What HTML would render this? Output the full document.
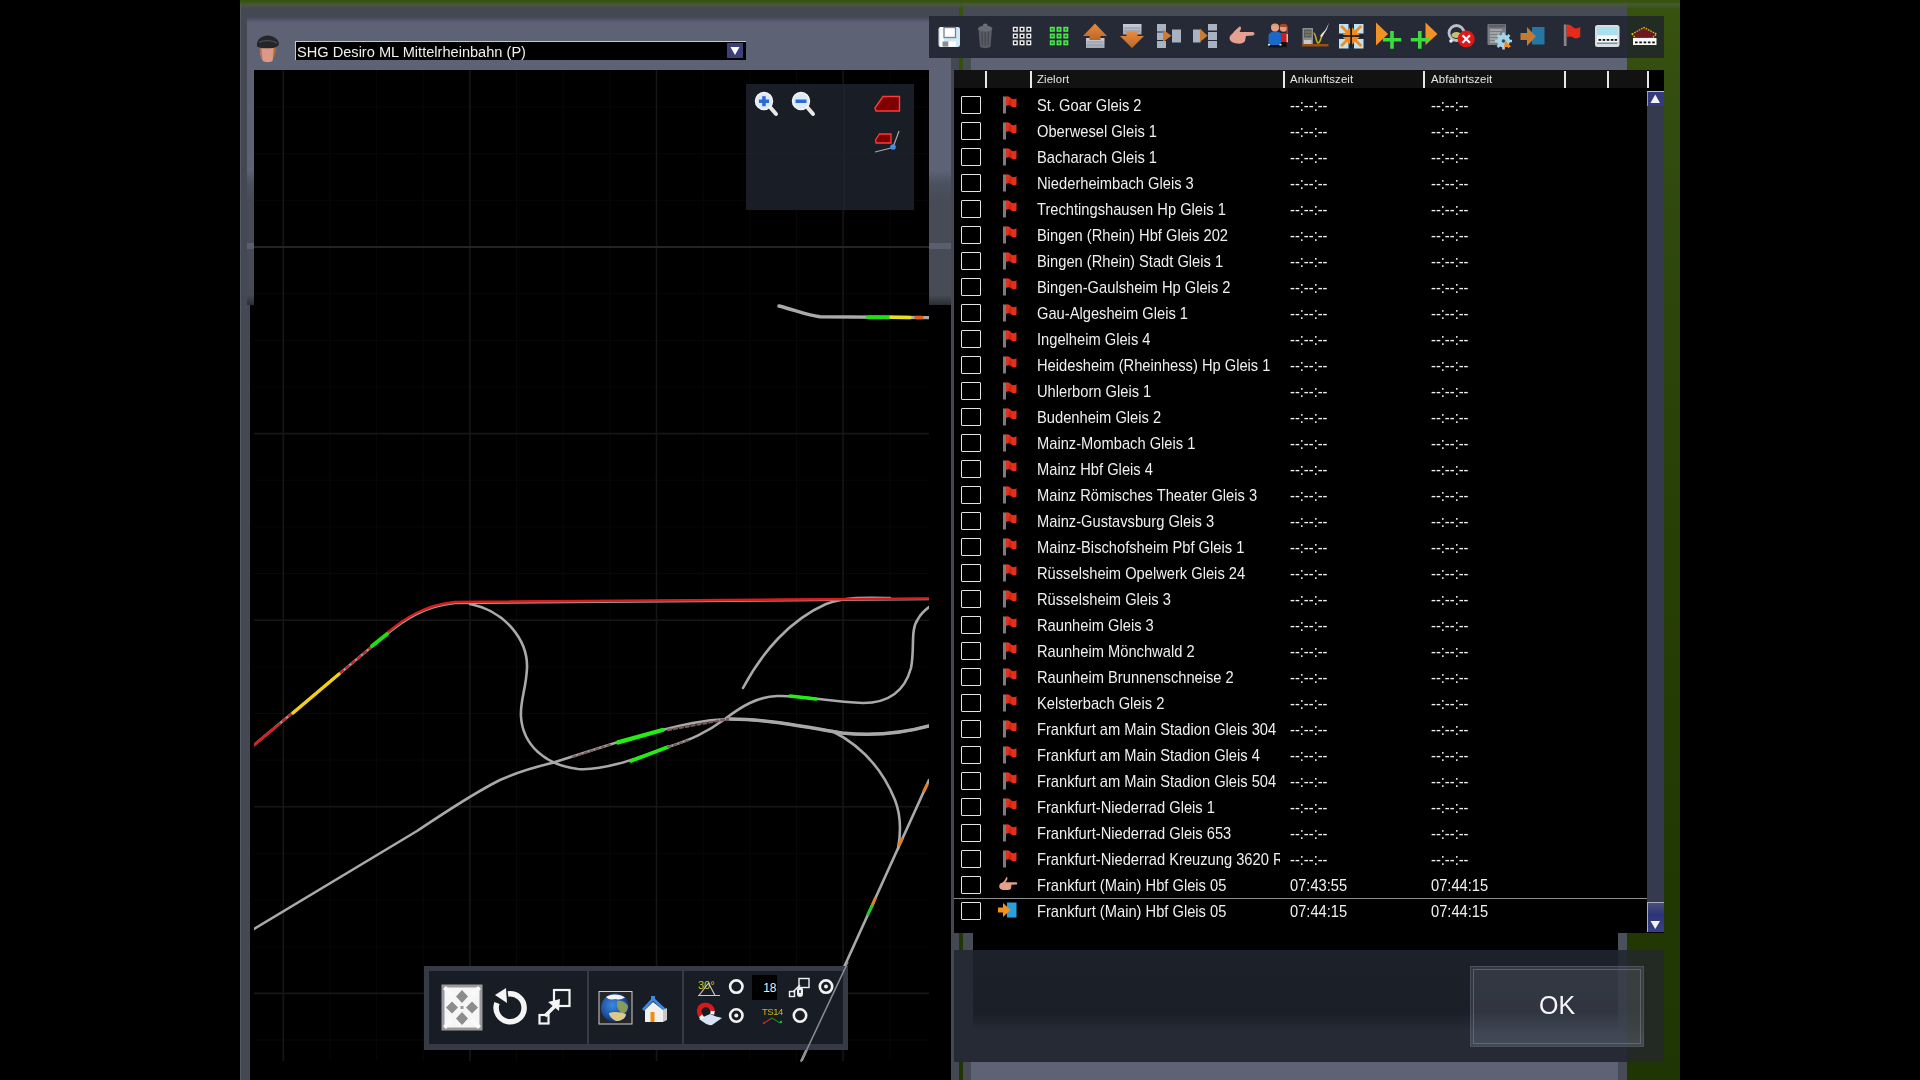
<!DOCTYPE html>
<html><head><meta charset="utf-8">
<style>
*{margin:0;padding:0;box-sizing:border-box}
html,body{width:1920px;height:1080px;overflow:hidden;background:#000;font-family:"Liberation Sans",sans-serif}
.a{position:absolute}
#world{left:240px;top:0;width:1440px;height:1080px;background:linear-gradient(#38530f 0px,#334c10 108px,#283f05 508px,#1f3503 1080px)}
#lw{left:240px;top:0;width:719px;height:1080px;background:#434852}
#lw .edge{left:0;top:0;width:1px;height:1080px;background:#545966}
#lpanel{left:247px;top:17px;width:704px;height:153px;background:linear-gradient(#424855 0,#5b6075 5px,#5d6275 7px)}
#lmid{left:247px;top:170px;width:704px;height:135px;background:linear-gradient(#5d6275 0,#4c5160 14px,#464b55 30px,#464b55 125px,#2a2d33 135px)}
#mapblk{left:250px;top:305px;width:701px;height:775px;background:#000}
#map{left:254px;top:70px;width:675px;height:991px;background:#000;overflow:hidden}
.fade{left:240px;top:0;width:1440px;height:17px;background:linear-gradient(#38530f 0px,#38530f 1.5px,rgba(74,90,58,0.8) 4.5px,rgba(66,72,85,0) 9px)}
#rw{left:963px;top:0;width:664px;height:1080px;background:#464b56}
#rpanel{left:971px;top:17px;width:656px;height:53px;background:#5d6275}
#toolbar{left:929px;top:16px;width:735px;height:42px;background:#252a36}
#toolbar .gr{left:698px;top:0;width:37px;height:42px;background:#232b25}
#list{left:954px;top:70px;width:710px;height:863px;background:#000}
#list2{left:973px;top:933px;width:645px;height:17px;background:#000}
#lgap{left:1618px;top:933px;width:9px;height:17px;background:#4b505c}
#hdr{left:954px;top:70px;width:693px;height:18px;background:#121212}
.sep{position:absolute;top:1px;width:1.5px;height:17px;background:#e8e8e8}
.hdrt{position:absolute;top:3px;will-change:transform;font-size:11.4px;color:#e6e6e6;letter-spacing:0.1px}
.cb{position:absolute;left:961px;width:20px;height:18px;border:1.6px solid #e4e4e4;border-radius:1px}
.ic{position:absolute;left:998px}
.rt{position:absolute;left:1037px;width:243px;height:22px;overflow:hidden;white-space:nowrap;font-size:14.7px;line-height:22px;color:#f0f0f0;transform:scaleY(1.07);transform-origin:0 0}
#rows{left:0;top:0;width:1920px;height:1080px;will-change:transform}
.rt.t1{left:1290px;width:130px}
.rt.t2{left:1431px;width:130px}
#bottombar{left:954px;top:950px;width:710px;height:112px;background:#252a35}
#bottompanel{left:971px;top:1062px;width:647px;height:18px;background:#5d6275}
</style></head><body>

<div class="a" id="world"></div>
<div class="a" id="lw"><div class="a edge"></div></div>
<div class="a" id="lpanel"></div>
<div class="a" id="lmid"></div>
<div class="a" style="left:247px;top:243px;width:704px;height:6px;background:#5a5f70"></div>
<div class="a" id="mapblk"></div>
<div class="a" id="map"></div>
<div class="a" id="rw"></div>
<div class="a" id="rpanel"></div>
<div class="a fade"></div>
<div class="a" id="toolbar"><div class="a gr"></div></div>
<div class="a" id="list"></div><div class="a" id="list2"></div><div class="a" id="lgap"></div>
<div class="a" id="hdr">
  <div class="sep" style="left:31px"></div>
  <div class="sep" style="left:76px"></div>
  <div class="hdrt" style="left:83px">Zielort</div>
  <div class="sep" style="left:329px"></div>
  <div class="hdrt" style="left:336px">Ankunftszeit</div>
  <div class="sep" style="left:469px"></div>
  <div class="hdrt" style="left:477px">Abfahrtszeit</div>
  <div class="sep" style="left:610px"></div>
  <div class="sep" style="left:653px"></div>
  <div class="sep" style="left:693px"></div>
</div>
<!-- driver + dropdown -->
<svg class="a" style="left:254px;top:33px" width="30" height="32" viewBox="0 0 30 32">
  <path d="M6,13 C5.5,19 6.5,25 9,28 C11,29.5 16,29.5 18.5,28 C19.5,24 20,18 19.5,13 Z" fill="#dc9a86"/>
  <path d="M6,14 C6,20 7,25 9,28 C8,24 7.5,19 7.5,14 Z" fill="#a86a58"/>
  <path d="M18,13 C20.5,15 21,20 19.5,25 C21.5,22 22.5,17 21.5,13 Z" fill="#c06a24"/>
  <path d="M3,12.5 C2.5,8 6,3 13,2.5 C20,2.5 24.5,6.5 25,10.5 C25,12.5 22.5,14.5 19,15 C14,15.5 9,15.5 5,14.5 C3.5,14 3,13.5 3,12.5 Z" fill="#26262a"/>
  <path d="M5,9.5 C9,7 18,7 23,10" stroke="#4a4a52" stroke-width="1.2" fill="none"/>
</svg>
<div class="a" style="left:295px;top:41px;width:451px;height:19px;background:#000;border-top:1px solid #c8c8c8;border-left:1px solid #c8c8c8"></div>
<div class="a" style="left:297px;top:39.5px;font-size:14.6px;line-height:22px;color:#f0f0f0;white-space:nowrap;transform:scaleY(1.06);transform-origin:0 0;will-change:transform">SHG Desiro ML Mittelrheinbahn (P)</div>
<div class="a" style="left:727px;top:43px;width:16px;height:15px;background:#3b4079"></div>
<svg class="a" style="left:727px;top:43px" width="16" height="15"><path d="M3.5,4 L12.5,4 L8,12 Z" fill="#fff"/></svg>

<!-- map svg -->
<svg class="a" style="left:0;top:0" width="1920" height="1080">
<defs><clipPath id="mc"><rect x="254" y="70" width="675" height="991"/></clipPath></defs>
<g clip-path="url(#mc)">
<line x1="329.9" y1="70" x2="329.9" y2="1061" stroke="#080808" stroke-width="1"/>
<line x1="376.6" y1="70" x2="376.6" y2="1061" stroke="#080808" stroke-width="1"/>
<line x1="423.2" y1="70" x2="423.2" y2="1061" stroke="#080808" stroke-width="1"/>
<line x1="516.5" y1="70" x2="516.5" y2="1061" stroke="#080808" stroke-width="1"/>
<line x1="563.2" y1="70" x2="563.2" y2="1061" stroke="#080808" stroke-width="1"/>
<line x1="609.9" y1="70" x2="609.9" y2="1061" stroke="#080808" stroke-width="1"/>
<line x1="703.1" y1="70" x2="703.1" y2="1061" stroke="#080808" stroke-width="1"/>
<line x1="749.8" y1="70" x2="749.8" y2="1061" stroke="#080808" stroke-width="1"/>
<line x1="796.5" y1="70" x2="796.5" y2="1061" stroke="#080808" stroke-width="1"/>
<line x1="889.8" y1="70" x2="889.8" y2="1061" stroke="#080808" stroke-width="1"/>
<line x1="254" y1="107.1" x2="929" y2="107.1" stroke="#080808" stroke-width="1"/>
<line x1="254" y1="153.7" x2="929" y2="153.7" stroke="#080808" stroke-width="1"/>
<line x1="254" y1="200.3" x2="929" y2="200.3" stroke="#080808" stroke-width="1"/>
<line x1="254" y1="293.6" x2="929" y2="293.6" stroke="#080808" stroke-width="1"/>
<line x1="254" y1="340.3" x2="929" y2="340.3" stroke="#080808" stroke-width="1"/>
<line x1="254" y1="386.9" x2="929" y2="386.9" stroke="#080808" stroke-width="1"/>
<line x1="254" y1="480.2" x2="929" y2="480.2" stroke="#080808" stroke-width="1"/>
<line x1="254" y1="526.9" x2="929" y2="526.9" stroke="#080808" stroke-width="1"/>
<line x1="254" y1="573.5" x2="929" y2="573.5" stroke="#080808" stroke-width="1"/>
<line x1="254" y1="666.8" x2="929" y2="666.8" stroke="#080808" stroke-width="1"/>
<line x1="254" y1="713.5" x2="929" y2="713.5" stroke="#080808" stroke-width="1"/>
<line x1="254" y1="760.1" x2="929" y2="760.1" stroke="#080808" stroke-width="1"/>
<line x1="254" y1="853.4" x2="929" y2="853.4" stroke="#080808" stroke-width="1"/>
<line x1="254" y1="900.1" x2="929" y2="900.1" stroke="#080808" stroke-width="1"/>
<line x1="254" y1="946.8" x2="929" y2="946.8" stroke="#080808" stroke-width="1"/>
<line x1="254" y1="1040.0" x2="929" y2="1040.0" stroke="#080808" stroke-width="1"/>
<line x1="283.3" y1="70" x2="283.3" y2="1061" stroke="#161616" stroke-width="1.6"/>
<line x1="469.9" y1="70" x2="469.9" y2="1061" stroke="#161616" stroke-width="1.6"/>
<line x1="656.5" y1="70" x2="656.5" y2="1061" stroke="#161616" stroke-width="1.6"/>
<line x1="843.1" y1="70" x2="843.1" y2="1061" stroke="#161616" stroke-width="1.6"/>
<line x1="254" y1="247.0" x2="929" y2="247.0" stroke="#242424" stroke-width="2"/>
<line x1="254" y1="433.6" x2="929" y2="433.6" stroke="#161616" stroke-width="1.6"/>
<line x1="254" y1="620.2" x2="929" y2="620.2" stroke="#161616" stroke-width="1.6"/>
<line x1="254" y1="806.8" x2="929" y2="806.8" stroke="#161616" stroke-width="1.6"/>
<line x1="254" y1="993.4" x2="929" y2="993.4" stroke="#161616" stroke-width="1.6"/>
<!-- zoom panel -->
<rect x="746" y="84" width="168" height="126" fill="#191d26"/>
<line x1="844.2" y1="84" x2="844.2" y2="210" stroke="#222631" stroke-width="1"/>
<line x1="746" y1="153.5" x2="914" y2="153.5" stroke="#1c2029" stroke-width="1"/>
<g>
 <line x1="770" y1="107" x2="776" y2="114" stroke="#e8e8e8" stroke-width="4" stroke-linecap="round"/>
 <circle cx="764" cy="101" r="8.5" fill="#dceaf6" stroke="#f4f4f4" stroke-width="1.5"/>
 <rect x="759" y="99.5" width="10" height="3.5" fill="#2a6ad8"/>
 <rect x="762.2" y="96.2" width="3.5" height="10" fill="#2a6ad8"/>
 <line x1="807" y1="107" x2="813" y2="114" stroke="#e8e8e8" stroke-width="4" stroke-linecap="round"/>
 <circle cx="801" cy="101" r="8.5" fill="#dceaf6" stroke="#f4f4f4" stroke-width="1.5"/>
 <rect x="795.5" y="99.5" width="11" height="3.5" fill="#2a6ad8"/>
 <path d="M875,108 L883,96.5 L899.5,96.5 L899.5,111 L876,111 Z" fill="#7e0000" stroke="#ff3a3a" stroke-width="1.4"/>
 <path d="M875.5,140 L879.5,134 L891,134 L891,143 L876,143 Z" fill="#7e0000" stroke="#ff3a3a" stroke-width="1.3"/>
 <path d="M875,152 L893,147.5 L899,131" stroke="#a8a8a8" stroke-width="1.2" fill="none"/>
 <circle cx="893" cy="147" r="2.8" fill="#4a8ae8"/>
</g>
<g fill="none" stroke-linecap="round" stroke-linejoin="round">
<!-- long line from bottom-left -->
<path d="M254,929 L417,831 C440,816 470,795 500,780 C520,771 535,767 552,763 L618,742 L662,730 C682,725 702,720 728,719 C765,719 800,726 842,733 C872,736 900,734 929,726" stroke="#a9a9a9" stroke-width="2.6"/>
<path d="M730,719 C765,719 800,726 842,733 C872,736 900,734 929,726" stroke="#a9a9a9" stroke-width="3.4"/>
<!-- S curve + lower track + right S -->
<path d="M470,604 C505,611 528,640 527,668 C526,690 520,700 521,717 C523,745 545,765 578,769 C605,771 640,757 668,747 C690,740 706,733 725,719 C742,706 757,697 777,696 C800,695 830,702 863,703 C890,703 905,690 911,668 C915,648 910,630 918,619 C921,613 925,610 929,607" stroke="#a9a9a9" stroke-width="2.6"/>
<!-- upper right curve -->
<path d="M743,688 C762,652 790,620 826,604 C846,597 860,597.5 890,598" stroke="#a9a9a9" stroke-width="2.6"/>
<!-- branch down -->
<path d="M832,731 C862,746 882,768 895,800 C902,818 900,838 898,849" stroke="#a9a9a9" stroke-width="2.6"/>
<path d="M929,780 L801,1062" stroke="#a9a9a9" stroke-width="2.6"/>
<!-- top short line -->
<path d="M779,306 C795,310 805,315 820,316.8 L929,317.6" stroke="#aaaaaa" stroke-width="3.4"/>
<path d="M868,317.2 L890,317.3" stroke="#22dd11" stroke-width="4"/>
<path d="M891,317.3 L910,317.5" stroke="#e8e020" stroke-width="3.6"/>
<path d="M916,317.5 L922,317.5" stroke="#e06010" stroke-width="3.4"/>
<!-- red main -->
<path d="M254,745 L387,634 C405,619 425,606 455,603 L929,599" stroke="#a0a0a0" stroke-width="2.6"/>
<path d="M254,745 L387,634" stroke="#d42020" stroke-width="2.2" stroke-dasharray="3.5 4"/>
<path d="M254,745 L276,727" stroke="#d42020" stroke-width="2.6"/>
<path d="M387,633 C405,618 425,605 455,602 L929,598.5" stroke="#dc1c1c" stroke-width="2.5"/>
<path d="M293,713 L339,674" stroke="#f0d010" stroke-width="3.4"/>
<path d="M372,646 L387,634" stroke="#22dd11" stroke-width="4"/>
<!-- green sections -->
<path d="M618,742.4 L662.5,730" stroke="#22ee11" stroke-width="4.4"/>
<path d="M631,761 L668,747" stroke="#22ee11" stroke-width="3.6"/>
<path d="M790,696 L816,699" stroke="#22ee11" stroke-width="3.4"/>
<!-- dashed brownish overlays -->
<path d="M668,730 L728,719" stroke="#7a5a5a" stroke-width="2.4" stroke-dasharray="3 3"/>
<path d="M573,757 L612,744" stroke="#7a5a5a" stroke-width="2" stroke-dasharray="3 3"/>
<path d="M668,747 L690,740" stroke="#7a5a5a" stroke-width="2" stroke-dasharray="3 3"/>
<path d="M872,906 L875,899" stroke="#e08020" stroke-width="3"/>
<path d="M868,914 L872,906" stroke="#22cc22" stroke-width="3"/>
<path d="M899,845 L902,839" stroke="#e08020" stroke-width="3"/>
<path d="M924,791 L927,785" stroke="#e08020" stroke-width="3"/>
</g>

</g>
</svg>

<!-- map bottom toolbar -->
<div class="a" style="left:424px;top:966px;width:424px;height:84px;background:#353a45"></div>
<div class="a" style="left:429px;top:971px;width:414px;height:73px;background:#181c25"></div>
<div class="a" style="left:587px;top:971px;width:2px;height:73px;background:#353a45"></div>
<div class="a" style="left:682px;top:971px;width:2px;height:73px;background:#353a45"></div>
<svg class="a" style="left:0;top:0;pointer-events:none" width="1920" height="1080">
 <!-- fit all -->
 <rect x="443" y="986" width="38" height="43" fill="#f6f6f6" stroke="#9a9a9a" stroke-width="3"/>
 <path d="M462,990 L468,996.5 L462,1003 L456,996.5 Z M462,1012 L468,1018.5 L462,1025 L456,1018.5 Z M446,1007.5 L452,1001.5 L458,1007.5 L452,1013.5 Z M466,1007.5 L472,1001.5 L478,1007.5 L472,1013.5 Z" fill="#8c8c8c"/>
 <path d="M444.5,987.5 L452,995 M479.5,987.5 L472,995 M444.5,1027.5 L452,1020 M479.5,1027.5 L472,1020" stroke="#fafafa" stroke-width="4"/>
 <rect x="460.5" y="1006" width="3" height="3" fill="#9a9a9a"/>
 <!-- rotate -->
 <path d="M497,1003 A14,14 0 1 0 508,994" stroke="#f4f4f4" stroke-width="5.5" fill="none"/>
 <path d="M495,995 L506,988 L507,1003 Z" fill="#f4f4f4"/>
 <!-- resize -->
 <rect x="539.5" y="1015" width="9" height="8.5" fill="none" stroke="#f4f4f4" stroke-width="2.2"/>
 <rect x="554" y="990" width="15.5" height="16" fill="none" stroke="#f4f4f4" stroke-width="2.2"/>
 <path d="M545,1016 L556,1005" stroke="#f4f4f4" stroke-width="3.5"/>
 <path d="M548,1002 L560,999 L559,1011 Z" fill="#f4f4f4"/>
 <!-- globe -->
 <defs><radialGradient id="glb" cx="0.4" cy="0.4" r="0.65"><stop offset="0" stop-color="#3a8ae0"/><stop offset="0.7" stop-color="#1a4a9a"/><stop offset="1" stop-color="#0a1a40"/></radialGradient></defs>
 <rect x="599" y="991.5" width="33" height="32.5" fill="#262626" stroke="#d0d0d0" stroke-width="1"/>
 <circle cx="615.5" cy="1008" r="14.5" fill="url(#glb)"/>
 <path d="M606,997 C610,993.5 620,993.5 625,997.5 C622,999.5 618,1000 615,999 C612,1000 608,999.5 606,997 Z" fill="#f4f4f4"/>
 <path d="M617,1001 C621,1000 626,1002 628,1006 C628,1010 626,1013 622,1014 C620,1011 617,1009 617,1005 Z" fill="#8a9a58"/>
 <path d="M609,1013 C614,1011 621,1012 626,1014 C626,1018 622,1021 616,1021 C612,1019 609,1016 609,1013 Z" fill="#e0c888"/>
 <!-- home -->
 <path d="M642,1009 L653,997 L666,1009 L664,1011 L653,1001 L644,1011 Z" fill="#3a8ae0"/>
 <rect x="651" y="996" width="4" height="5" fill="#3a8ae0"/>
 <path d="M645,1010 L653,1002 L663,1010 L663,1022 L645,1022 Z" fill="#f0f0f0"/>
 <path d="M663,1010 L667,1008 L667,1020 L663,1022 Z" fill="#c8c8c8"/>
 <rect x="650.5" y="1012" width="4" height="10" fill="#f08c10"/>
 <!-- 30 deg -->
 <text x="698" y="989" font-family="Liberation Sans" font-size="11" fill="#d8c020">30°</text>
 <path d="M699,995.5 L708.5,983 L715,995.5 M698,995.5 L720,995.5" stroke="#c8c8c8" stroke-width="1.2" fill="none"/>
 <circle cx="736.3" cy="986.6" r="6.2" fill="none" stroke="#f2f2f2" stroke-width="2.6"/>
 <rect x="752" y="975" width="25" height="25" fill="#000"/>
 <text x="776.5" y="992" font-family="Liberation Sans" font-size="12" fill="#f0f0f0" text-anchor="end">18</text>
 <!-- mouse icon -->
 <rect x="799" y="978.5" width="10" height="9" fill="none" stroke="#f0f0f0" stroke-width="1.4"/>
 <rect x="789.5" y="991.5" width="5" height="5" fill="none" stroke="#f0f0f0" stroke-width="1.4"/>
 <path d="M793,992 L800,985" stroke="#f0f0f0" stroke-width="1.6"/>
 <rect x="797" y="987" width="6" height="10" rx="3" fill="#f0f0f0"/>
 <rect x="799.2" y="990" width="1.6" height="3" fill="#303030"/>
 <circle cx="826" cy="986.6" r="6.2" fill="none" stroke="#f2f2f2" stroke-width="2.6"/>
 <circle cx="826" cy="986.6" r="2" fill="#f2f2f2"/>
 <!-- magnet -->
 <path d="M699,1019 C703,1022 708,1026 712,1025 L722,1018 C718,1017 714,1016 710,1014 Z" fill="#d4e4f4"/>
 <path d="M701.5,1017 C697.5,1012 699,1006 704.5,1005 C709,1004.5 713,1008 712.5,1012" stroke="#d41a1a" stroke-width="4.6" fill="none"/>
 <rect x="699.5" y="1015.5" width="4" height="3.5" fill="#f4f4f4" transform="rotate(-40 701.5 1017)"/>
 <rect x="710.5" y="1011" width="4" height="3.5" fill="#f4f4f4" transform="rotate(10 712.5 1012.5)"/>
 <circle cx="736.3" cy="1015.5" r="6.2" fill="none" stroke="#f2f2f2" stroke-width="2.6"/>
 <circle cx="736.3" cy="1015.5" r="2" fill="#f2f2f2"/>
 <!-- TS14 -->
 <text x="762" y="1015" font-family="Liberation Sans" font-size="9.5" fill="#c8b820" letter-spacing="-0.5">TS14</text>
 <path d="M764,1023 L772,1018 L780,1023" stroke="#20a020" stroke-width="1" fill="none"/>
 <path d="M764,1023 L771,1019" stroke="#cc2020" stroke-width="1"/>
 <circle cx="764" cy="1023" r="1.2" fill="#cc2020"/><circle cx="781" cy="1022" r="1.2" fill="#20c020"/>
 <circle cx="800" cy="1015.5" r="6.2" fill="none" stroke="#f2f2f2" stroke-width="2.6"/>
 <!-- diagonal track over toolbar -->
 <path d="M848,962 L801,1062" stroke="#8a8d94" stroke-width="1.6"/>
</svg>
<svg class="a" style="left:0;top:0;pointer-events:none" width="1920" height="70">
<defs>
 <linearGradient id="og" x1="0" y1="0" x2="0" y2="1"><stop offset="0" stop-color="#e88a3c"/><stop offset="1" stop-color="#b8682a"/></linearGradient>
 <linearGradient id="gbx" x1="0" y1="0" x2="0" y2="1"><stop offset="0" stop-color="#c8ccd4"/><stop offset="1" stop-color="#a0a8b4"/></linearGradient>
</defs>
<!-- 1 save -->
<rect x="938.5" y="27" width="21.5" height="20" rx="2.2" fill="#d2e8f6"/>
<rect x="940" y="27" width="4" height="20" fill="#f6fbff"/>
<rect x="944" y="27.5" width="11.5" height="10" fill="#fdfdfd" stroke="#7c8088" stroke-width="1.3"/>
<rect x="942.5" y="41.5" width="6" height="5" fill="#8c8c8c"/>
<rect x="948.5" y="41.5" width="7.5" height="5" fill="#ffffff"/>
<!-- 2 trash -->
<path d="M978.5,29 L992,29 L990.5,47 C987,48.5 983,48.5 980,47 Z" fill="#595c64"/>
<ellipse cx="985.2" cy="28.5" rx="7.2" ry="3" fill="#686b73"/>
<ellipse cx="985.2" cy="25" rx="2.3" ry="1.5" fill="#6e7178"/>
<path d="M982,32 L982.5,45 M985.2,32 L985.2,46 M988.5,32 L988,45" stroke="#45474e" stroke-width="1.2"/>
<!-- 3 grid -->
<rect x="1012.80" y="26.80" width="5" height="5" fill="#f0f0f0"/>
<rect x="1014.20" y="28.20" width="2.2" height="2.2" fill="#000"/>
<rect x="1019.55" y="26.80" width="5" height="5" fill="#f0f0f0"/>
<rect x="1020.95" y="28.20" width="2.2" height="2.2" fill="#000"/>
<rect x="1026.30" y="26.80" width="5" height="5" fill="#f0f0f0"/>
<rect x="1027.70" y="28.20" width="2.2" height="2.2" fill="#000"/>
<rect x="1012.80" y="33.55" width="5" height="5" fill="#f0f0f0"/>
<rect x="1014.20" y="34.95" width="2.2" height="2.2" fill="#000"/>
<rect x="1019.55" y="33.55" width="5" height="5" fill="#f0f0f0"/>
<rect x="1020.95" y="34.95" width="2.2" height="2.2" fill="#000"/>
<rect x="1026.30" y="33.55" width="5" height="5" fill="#f0f0f0"/>
<rect x="1027.70" y="34.95" width="2.2" height="2.2" fill="#000"/>
<rect x="1012.80" y="40.30" width="5" height="5" fill="#f0f0f0"/>
<rect x="1014.20" y="41.70" width="2.2" height="2.2" fill="#000"/>
<rect x="1019.55" y="40.30" width="5" height="5" fill="#f0f0f0"/>
<rect x="1020.95" y="41.70" width="2.2" height="2.2" fill="#000"/>
<rect x="1026.30" y="40.30" width="5" height="5" fill="#f0f0f0"/>
<rect x="1027.70" y="41.70" width="2.2" height="2.2" fill="#000"/>
<!-- 4 green grid -->
<rect x="1049.80" y="26.80" width="5" height="5" fill="#50e850"/>
<rect x="1051.20" y="28.20" width="2.2" height="2.2" fill="#0c9a14"/>
<rect x="1056.55" y="26.80" width="5" height="5" fill="#50e850"/>
<rect x="1057.95" y="28.20" width="2.2" height="2.2" fill="#0c9a14"/>
<rect x="1063.30" y="26.80" width="5" height="5" fill="#50e850"/>
<rect x="1064.70" y="28.20" width="2.2" height="2.2" fill="#0c9a14"/>
<rect x="1049.80" y="33.55" width="5" height="5" fill="#50e850"/>
<rect x="1051.20" y="34.95" width="2.2" height="2.2" fill="#0c9a14"/>
<rect x="1056.55" y="33.55" width="5" height="5" fill="#50e850"/>
<rect x="1057.95" y="34.95" width="2.2" height="2.2" fill="#0c9a14"/>
<rect x="1063.30" y="33.55" width="5" height="5" fill="#50e850"/>
<rect x="1064.70" y="34.95" width="2.2" height="2.2" fill="#0c9a14"/>
<rect x="1049.80" y="40.30" width="5" height="5" fill="#50e850"/>
<rect x="1051.20" y="41.70" width="2.2" height="2.2" fill="#0c9a14"/>
<rect x="1056.55" y="40.30" width="5" height="5" fill="#50e850"/>
<rect x="1057.95" y="41.70" width="2.2" height="2.2" fill="#0c9a14"/>
<rect x="1063.30" y="40.30" width="5" height="5" fill="#50e850"/>
<rect x="1064.70" y="41.70" width="2.2" height="2.2" fill="#0c9a14"/>
<!-- 5 upload -->
<rect x="1086" y="38" width="18.5" height="10" fill="url(#gbx)"/>
<path d="M1087,42 H1103 M1087,45 H1103" stroke="#8890a0" stroke-width="0.8"/>
<path d="M1095,23.5 L1107,36 L1100.5,36 L1100.5,40 L1089.5,40 L1089.5,36 L1083,36 Z" fill="url(#og)"/>
<!-- 6 download -->
<rect x="1123" y="24" width="18.5" height="10.5" fill="url(#gbx)"/>
<path d="M1124,28 H1140 M1124,31 H1140" stroke="#8890a0" stroke-width="0.8"/>
<path d="M1126.5,32 L1137.5,32 L1137.5,36 L1144,36 L1132,48 L1120,36 L1126.5,36 Z" fill="url(#og)"/>
<!-- 7 -->
<g fill="#a8b2c2">
<rect x="1157" y="24" width="9" height="7.5"/><rect x="1157" y="32.5" width="9" height="7.5"/><rect x="1157" y="41" width="9" height="7"/>
<rect x="1172" y="29.5" width="9" height="13"/>
</g>
<path d="M1163,29.5 L1171.5,35.8 L1163,42 Z" fill="#d07a30"/>
<!-- 8 -->
<g fill="#a8b2c2">
<rect x="1193" y="29.5" width="7.5" height="13"/>
<rect x="1208" y="24" width="9" height="6.5"/><rect x="1208" y="32" width="9" height="8"/><rect x="1208" y="41" width="9" height="7"/>
</g>
<path d="M1200,28.5 L1207.5,35.8 L1200,42 Z" fill="#d07a30"/>
<!-- 9 hand -->
<path d="M1233,33 C1235,30 1238,28 1239.5,26.5 C1241,26 1241.5,28 1240.5,30 L1239.5,32 L1253,32 C1255,32.5 1255,35 1253,35.5 L1246,36 L1245,41 C1244,43 1241,44 1237,43.5 C1233,43 1230,41.5 1229.5,38.5 C1229.5,36 1231,34.5 1233,33 Z" fill="#e4a090"/>
<!-- 10 people -->
<path d="M1279.5,33 L1287.5,33 L1288,43 L1286,43 L1286,47.5 L1280,47.5 Z" fill="#cc1c1c"/>
<rect x="1280" y="42" width="6.5" height="5.5" fill="#101010"/>
<circle cx="1283.5" cy="28" r="3.8" fill="#e49a8a"/>
<path d="M1279.5,26 C1280,23 1287,23 1287.5,26 L1288,33 L1286.5,33 L1286.5,27 L1280.5,27 Z" fill="#a84818"/>
<rect x="1286.5" y="34" width="1.5" height="8" fill="#f0b0b0"/>
<path d="M1268.5,35 C1269,32.5 1272,31.5 1275,31.5 C1278,31.5 1281,32.5 1281,35 L1281,45.5 L1268.5,45.5 Z" fill="#1a68c8"/>
<rect x="1269" y="45" width="12" height="2.5" fill="#101010"/>
<circle cx="1275" cy="27.5" r="4" fill="#e8a088"/>
<path d="M1271,26.5 C1271,23.5 1279,23.5 1279,26.5 C1277,25 1273,25 1271,26.5 Z" fill="#d8a040"/>
<rect x="1268" y="44" width="2" height="1.5" fill="#e8e8e8"/><rect x="1279.5" y="44" width="2" height="1.5" fill="#e8e8e8"/>
<!-- 11 fuel -->
<rect x="1302.5" y="28" width="10.5" height="16" fill="#8c8e90"/>
<rect x="1304" y="29.5" width="7.5" height="8" fill="#5a5c58"/>
<path d="M1305,32 H1310.5 M1305,35 H1310.5" stroke="#8a8a70" stroke-width="1.2"/>
<rect x="1304" y="40" width="7.5" height="4" fill="#c8c8c8"/>
<rect x="1302" y="44" width="26.5" height="2.5" fill="#9a5010"/>
<path d="M1313.5,33 C1316,33 1316,43 1318,43 C1321,43 1321,35 1323,33" stroke="#c8b020" stroke-width="1.6" fill="none"/>
<path d="M1320,36 L1326,29 L1329,22.5 L1327,29 L1322,37 Z" fill="#e8e8e8"/>
<!-- 12 compress -->
<g fill="#bfe3f2"><rect x="1339" y="24" width="9.5" height="9.5"/><rect x="1354" y="24" width="9.5" height="9.5"/><rect x="1339" y="39" width="9.5" height="9.5"/><rect x="1354" y="39" width="9.5" height="9.5"/></g>
<path d="M1350.9,35.7 L1350.2,27.5 L1342.7,35.0 Z" fill="#f28a1c"/>
<path d="M1341.2,26.0 L1347.2,32.0" stroke="#f28a1c" stroke-width="2.6"/>
<path d="M1350.9,36.3 L1350.2,44.5 L1342.7,37.0 Z" fill="#f28a1c"/>
<path d="M1341.2,46.0 L1347.2,40.0" stroke="#f28a1c" stroke-width="2.6"/>
<path d="M1351.5,35.7 L1352.2,27.5 L1359.7,35.0 Z" fill="#f28a1c"/>
<path d="M1361.2,26.0 L1355.2,32.0" stroke="#f28a1c" stroke-width="2.6"/>
<path d="M1351.5,36.3 L1352.2,44.5 L1359.7,37.0 Z" fill="#f28a1c"/>
<path d="M1361.2,46.0 L1355.2,40.0" stroke="#f28a1c" stroke-width="2.6"/>
<path d="M1351.2,24 V48 M1339.2,36 H1363.2" stroke="#1a1d24" stroke-width="1.6"/>
<!-- 13 -->
<path d="M1376,22.5 L1388,34 L1376,45.5 Z" fill="#f39224"/>
<path d="M1390.2,31 H1393.8 V38 H1401.3 V41.6 H1393.8 V48.8 H1390.2 V41.6 H1383 V38 H1390.2 Z" fill="#3cdc3c"/>
<!-- 14 -->
<path d="M1425.5,22.5 L1437.5,34 L1425.5,45 Z" fill="#f39224"/>
<path d="M1418,31 H1421.6 V38 H1429 V41.6 H1421.6 V48.8 H1418 V41.6 H1410.8 V38 H1418 Z" fill="#3cdc3c"/>
<!-- 15 -->
<circle cx="1456.5" cy="33" r="7.5" fill="none" stroke="#b8c0c8" stroke-width="2.8"/>
<ellipse cx="1456.5" cy="35" rx="5" ry="3" fill="#c8c070"/>
<circle cx="1451" cy="41" r="1.8" fill="#f0f0f0"/>
<circle cx="1466.2" cy="39" r="8.5" fill="#e01818"/>
<path d="M1462.5,35.3 L1469.9,42.7 M1469.9,35.3 L1462.5,42.7" stroke="#fff" stroke-width="2.2"/>
<!-- 16 -->
<rect x="1487.5" y="24" width="18.5" height="21" rx="1" fill="#7a7e84"/>
<rect x="1488.5" y="24.5" width="16.5" height="3" fill="#5c6064"/>
<path d="M1490,30 H1502 M1490,33 H1500 M1490,36 H1498 M1490,39 H1497 M1490,42 H1497" stroke="#c8c8c8" stroke-width="1"/>
<circle cx="1503.5" cy="41" r="6.5" fill="#a8d4e8"/>
<g stroke="#a8d4e8" stroke-width="2.6"><path d="M1503.5,32.5 V49.5 M1495,41 H1512 M1497.5,35 L1509.5,47 M1509.5,35 L1497.5,47"/></g>
<circle cx="1503.5" cy="41" r="1.8" fill="#1a5070"/>
<path d="M1505,40 L1511,47 L1504,47 Z" fill="#f08a24"/>
<!-- 17 -->
<rect x="1532" y="27" width="12.5" height="17.5" fill="#2676a4"/>
<path d="M1520.5,33 L1527,33 L1527,27 L1536,36.5 L1527,46 L1527,40 L1520.5,40 Z" fill="#c27a34"/>
<!-- 18 flag -->
<rect x="1563.8" y="24.5" width="2.8" height="21.5" fill="#868686"/>
<path d="M1566.6,24.8 C1569,24 1572,26 1574,28 C1576,29 1578,28 1580.2,27 L1580.2,37 C1578,38 1576,39 1574,38 C1572,36.5 1569,36 1566.6,37.5 Z" fill="#e82a1a"/>
<!-- 19 device -->
<rect x="1595" y="25" width="24.5" height="22" rx="2.5" fill="#dadddf"/>
<rect x="1597" y="27" width="20.5" height="8" fill="#a8e0f0"/>
<rect x="1597" y="35.5" width="20.5" height="7" fill="#f8f8f8"/>
<g fill="#111"><rect x="1598.5" y="39" width="2.6" height="1.8"/><rect x="1602.6" y="39" width="2.6" height="1.8"/><rect x="1606.7" y="39" width="2.6" height="1.8"/><rect x="1610.8" y="39" width="2.6" height="1.8"/><rect x="1614.6" y="39" width="2.4" height="1.8"/></g>
<rect x="1597" y="42.5" width="20.5" height="1.5" fill="#6a9ab0"/>
<!-- 20 house -->
<path d="M1632,34 L1644,27.5 L1656.5,34 L1652,38.5 L1636,38.5 Z" fill="#6e1a1c" stroke="#d8c020" stroke-width="1.3" stroke-dasharray="1.6 1"/>
<rect x="1633" y="38" width="23.5" height="7" fill="#f8f8f8"/>
<g fill="#111"><rect x="1635" y="41.5" width="2.6" height="1.8"/><rect x="1639.3" y="41.5" width="2.6" height="1.8"/><rect x="1643.6" y="41.5" width="2.6" height="1.8"/><rect x="1647.9" y="41.5" width="2.6" height="1.8"/><rect x="1652.2" y="41.5" width="2.6" height="1.8"/></g>
</svg>
<div class="a" id="rows"><div class="cb" style="top:96px"></div>
<svg class="ic" style="top:96px" width="22" height="18"><rect x="5" y="0.5" width="3" height="17" fill="#7c7c7c"/><path d="M8,0.5 C10,-0.5 12,0.8 13.5,2.8 C15,3.8 16.5,3 18.5,2.2 L18.5,10.5 C16.5,11.5 15,11.8 13.5,10.5 C12,9 10,9 8,10 Z" fill="#e4301a"/><path d="M12,2 C13,3.5 14,5 13.5,10.2 C12,9 11,9 10,9.2 Z" fill="#b82010" opacity="0.55"/></svg>
<div class="rt" style="top:93.5px">St. Goar Gleis 2</div>
<div class="rt t1" style="top:93.5px">--:--:--</div>
<div class="rt t2" style="top:93.5px">--:--:--</div>
<div class="cb" style="top:122px"></div>
<svg class="ic" style="top:122px" width="22" height="18"><rect x="5" y="0.5" width="3" height="17" fill="#7c7c7c"/><path d="M8,0.5 C10,-0.5 12,0.8 13.5,2.8 C15,3.8 16.5,3 18.5,2.2 L18.5,10.5 C16.5,11.5 15,11.8 13.5,10.5 C12,9 10,9 8,10 Z" fill="#e4301a"/><path d="M12,2 C13,3.5 14,5 13.5,10.2 C12,9 11,9 10,9.2 Z" fill="#b82010" opacity="0.55"/></svg>
<div class="rt" style="top:119.5px">Oberwesel Gleis 1</div>
<div class="rt t1" style="top:119.5px">--:--:--</div>
<div class="rt t2" style="top:119.5px">--:--:--</div>
<div class="cb" style="top:148px"></div>
<svg class="ic" style="top:148px" width="22" height="18"><rect x="5" y="0.5" width="3" height="17" fill="#7c7c7c"/><path d="M8,0.5 C10,-0.5 12,0.8 13.5,2.8 C15,3.8 16.5,3 18.5,2.2 L18.5,10.5 C16.5,11.5 15,11.8 13.5,10.5 C12,9 10,9 8,10 Z" fill="#e4301a"/><path d="M12,2 C13,3.5 14,5 13.5,10.2 C12,9 11,9 10,9.2 Z" fill="#b82010" opacity="0.55"/></svg>
<div class="rt" style="top:145.5px">Bacharach Gleis 1</div>
<div class="rt t1" style="top:145.5px">--:--:--</div>
<div class="rt t2" style="top:145.5px">--:--:--</div>
<div class="cb" style="top:174px"></div>
<svg class="ic" style="top:174px" width="22" height="18"><rect x="5" y="0.5" width="3" height="17" fill="#7c7c7c"/><path d="M8,0.5 C10,-0.5 12,0.8 13.5,2.8 C15,3.8 16.5,3 18.5,2.2 L18.5,10.5 C16.5,11.5 15,11.8 13.5,10.5 C12,9 10,9 8,10 Z" fill="#e4301a"/><path d="M12,2 C13,3.5 14,5 13.5,10.2 C12,9 11,9 10,9.2 Z" fill="#b82010" opacity="0.55"/></svg>
<div class="rt" style="top:171.5px">Niederheimbach Gleis 3</div>
<div class="rt t1" style="top:171.5px">--:--:--</div>
<div class="rt t2" style="top:171.5px">--:--:--</div>
<div class="cb" style="top:200px"></div>
<svg class="ic" style="top:200px" width="22" height="18"><rect x="5" y="0.5" width="3" height="17" fill="#7c7c7c"/><path d="M8,0.5 C10,-0.5 12,0.8 13.5,2.8 C15,3.8 16.5,3 18.5,2.2 L18.5,10.5 C16.5,11.5 15,11.8 13.5,10.5 C12,9 10,9 8,10 Z" fill="#e4301a"/><path d="M12,2 C13,3.5 14,5 13.5,10.2 C12,9 11,9 10,9.2 Z" fill="#b82010" opacity="0.55"/></svg>
<div class="rt" style="top:197.5px">Trechtingshausen Hp Gleis 1</div>
<div class="rt t1" style="top:197.5px">--:--:--</div>
<div class="rt t2" style="top:197.5px">--:--:--</div>
<div class="cb" style="top:226px"></div>
<svg class="ic" style="top:226px" width="22" height="18"><rect x="5" y="0.5" width="3" height="17" fill="#7c7c7c"/><path d="M8,0.5 C10,-0.5 12,0.8 13.5,2.8 C15,3.8 16.5,3 18.5,2.2 L18.5,10.5 C16.5,11.5 15,11.8 13.5,10.5 C12,9 10,9 8,10 Z" fill="#e4301a"/><path d="M12,2 C13,3.5 14,5 13.5,10.2 C12,9 11,9 10,9.2 Z" fill="#b82010" opacity="0.55"/></svg>
<div class="rt" style="top:223.5px">Bingen (Rhein) Hbf Gleis 202</div>
<div class="rt t1" style="top:223.5px">--:--:--</div>
<div class="rt t2" style="top:223.5px">--:--:--</div>
<div class="cb" style="top:252px"></div>
<svg class="ic" style="top:252px" width="22" height="18"><rect x="5" y="0.5" width="3" height="17" fill="#7c7c7c"/><path d="M8,0.5 C10,-0.5 12,0.8 13.5,2.8 C15,3.8 16.5,3 18.5,2.2 L18.5,10.5 C16.5,11.5 15,11.8 13.5,10.5 C12,9 10,9 8,10 Z" fill="#e4301a"/><path d="M12,2 C13,3.5 14,5 13.5,10.2 C12,9 11,9 10,9.2 Z" fill="#b82010" opacity="0.55"/></svg>
<div class="rt" style="top:249.5px">Bingen (Rhein) Stadt Gleis 1</div>
<div class="rt t1" style="top:249.5px">--:--:--</div>
<div class="rt t2" style="top:249.5px">--:--:--</div>
<div class="cb" style="top:278px"></div>
<svg class="ic" style="top:278px" width="22" height="18"><rect x="5" y="0.5" width="3" height="17" fill="#7c7c7c"/><path d="M8,0.5 C10,-0.5 12,0.8 13.5,2.8 C15,3.8 16.5,3 18.5,2.2 L18.5,10.5 C16.5,11.5 15,11.8 13.5,10.5 C12,9 10,9 8,10 Z" fill="#e4301a"/><path d="M12,2 C13,3.5 14,5 13.5,10.2 C12,9 11,9 10,9.2 Z" fill="#b82010" opacity="0.55"/></svg>
<div class="rt" style="top:275.5px">Bingen-Gaulsheim Hp Gleis 2</div>
<div class="rt t1" style="top:275.5px">--:--:--</div>
<div class="rt t2" style="top:275.5px">--:--:--</div>
<div class="cb" style="top:304px"></div>
<svg class="ic" style="top:304px" width="22" height="18"><rect x="5" y="0.5" width="3" height="17" fill="#7c7c7c"/><path d="M8,0.5 C10,-0.5 12,0.8 13.5,2.8 C15,3.8 16.5,3 18.5,2.2 L18.5,10.5 C16.5,11.5 15,11.8 13.5,10.5 C12,9 10,9 8,10 Z" fill="#e4301a"/><path d="M12,2 C13,3.5 14,5 13.5,10.2 C12,9 11,9 10,9.2 Z" fill="#b82010" opacity="0.55"/></svg>
<div class="rt" style="top:301.5px">Gau-Algesheim Gleis 1</div>
<div class="rt t1" style="top:301.5px">--:--:--</div>
<div class="rt t2" style="top:301.5px">--:--:--</div>
<div class="cb" style="top:330px"></div>
<svg class="ic" style="top:330px" width="22" height="18"><rect x="5" y="0.5" width="3" height="17" fill="#7c7c7c"/><path d="M8,0.5 C10,-0.5 12,0.8 13.5,2.8 C15,3.8 16.5,3 18.5,2.2 L18.5,10.5 C16.5,11.5 15,11.8 13.5,10.5 C12,9 10,9 8,10 Z" fill="#e4301a"/><path d="M12,2 C13,3.5 14,5 13.5,10.2 C12,9 11,9 10,9.2 Z" fill="#b82010" opacity="0.55"/></svg>
<div class="rt" style="top:327.5px">Ingelheim Gleis 4</div>
<div class="rt t1" style="top:327.5px">--:--:--</div>
<div class="rt t2" style="top:327.5px">--:--:--</div>
<div class="cb" style="top:356px"></div>
<svg class="ic" style="top:356px" width="22" height="18"><rect x="5" y="0.5" width="3" height="17" fill="#7c7c7c"/><path d="M8,0.5 C10,-0.5 12,0.8 13.5,2.8 C15,3.8 16.5,3 18.5,2.2 L18.5,10.5 C16.5,11.5 15,11.8 13.5,10.5 C12,9 10,9 8,10 Z" fill="#e4301a"/><path d="M12,2 C13,3.5 14,5 13.5,10.2 C12,9 11,9 10,9.2 Z" fill="#b82010" opacity="0.55"/></svg>
<div class="rt" style="top:353.5px">Heidesheim (Rheinhess) Hp Gleis 1</div>
<div class="rt t1" style="top:353.5px">--:--:--</div>
<div class="rt t2" style="top:353.5px">--:--:--</div>
<div class="cb" style="top:382px"></div>
<svg class="ic" style="top:382px" width="22" height="18"><rect x="5" y="0.5" width="3" height="17" fill="#7c7c7c"/><path d="M8,0.5 C10,-0.5 12,0.8 13.5,2.8 C15,3.8 16.5,3 18.5,2.2 L18.5,10.5 C16.5,11.5 15,11.8 13.5,10.5 C12,9 10,9 8,10 Z" fill="#e4301a"/><path d="M12,2 C13,3.5 14,5 13.5,10.2 C12,9 11,9 10,9.2 Z" fill="#b82010" opacity="0.55"/></svg>
<div class="rt" style="top:379.5px">Uhlerborn Gleis 1</div>
<div class="rt t1" style="top:379.5px">--:--:--</div>
<div class="rt t2" style="top:379.5px">--:--:--</div>
<div class="cb" style="top:408px"></div>
<svg class="ic" style="top:408px" width="22" height="18"><rect x="5" y="0.5" width="3" height="17" fill="#7c7c7c"/><path d="M8,0.5 C10,-0.5 12,0.8 13.5,2.8 C15,3.8 16.5,3 18.5,2.2 L18.5,10.5 C16.5,11.5 15,11.8 13.5,10.5 C12,9 10,9 8,10 Z" fill="#e4301a"/><path d="M12,2 C13,3.5 14,5 13.5,10.2 C12,9 11,9 10,9.2 Z" fill="#b82010" opacity="0.55"/></svg>
<div class="rt" style="top:405.5px">Budenheim Gleis 2</div>
<div class="rt t1" style="top:405.5px">--:--:--</div>
<div class="rt t2" style="top:405.5px">--:--:--</div>
<div class="cb" style="top:434px"></div>
<svg class="ic" style="top:434px" width="22" height="18"><rect x="5" y="0.5" width="3" height="17" fill="#7c7c7c"/><path d="M8,0.5 C10,-0.5 12,0.8 13.5,2.8 C15,3.8 16.5,3 18.5,2.2 L18.5,10.5 C16.5,11.5 15,11.8 13.5,10.5 C12,9 10,9 8,10 Z" fill="#e4301a"/><path d="M12,2 C13,3.5 14,5 13.5,10.2 C12,9 11,9 10,9.2 Z" fill="#b82010" opacity="0.55"/></svg>
<div class="rt" style="top:431.5px">Mainz-Mombach Gleis 1</div>
<div class="rt t1" style="top:431.5px">--:--:--</div>
<div class="rt t2" style="top:431.5px">--:--:--</div>
<div class="cb" style="top:460px"></div>
<svg class="ic" style="top:460px" width="22" height="18"><rect x="5" y="0.5" width="3" height="17" fill="#7c7c7c"/><path d="M8,0.5 C10,-0.5 12,0.8 13.5,2.8 C15,3.8 16.5,3 18.5,2.2 L18.5,10.5 C16.5,11.5 15,11.8 13.5,10.5 C12,9 10,9 8,10 Z" fill="#e4301a"/><path d="M12,2 C13,3.5 14,5 13.5,10.2 C12,9 11,9 10,9.2 Z" fill="#b82010" opacity="0.55"/></svg>
<div class="rt" style="top:457.5px">Mainz Hbf Gleis 4</div>
<div class="rt t1" style="top:457.5px">--:--:--</div>
<div class="rt t2" style="top:457.5px">--:--:--</div>
<div class="cb" style="top:486px"></div>
<svg class="ic" style="top:486px" width="22" height="18"><rect x="5" y="0.5" width="3" height="17" fill="#7c7c7c"/><path d="M8,0.5 C10,-0.5 12,0.8 13.5,2.8 C15,3.8 16.5,3 18.5,2.2 L18.5,10.5 C16.5,11.5 15,11.8 13.5,10.5 C12,9 10,9 8,10 Z" fill="#e4301a"/><path d="M12,2 C13,3.5 14,5 13.5,10.2 C12,9 11,9 10,9.2 Z" fill="#b82010" opacity="0.55"/></svg>
<div class="rt" style="top:483.5px">Mainz Römisches Theater Gleis 3</div>
<div class="rt t1" style="top:483.5px">--:--:--</div>
<div class="rt t2" style="top:483.5px">--:--:--</div>
<div class="cb" style="top:512px"></div>
<svg class="ic" style="top:512px" width="22" height="18"><rect x="5" y="0.5" width="3" height="17" fill="#7c7c7c"/><path d="M8,0.5 C10,-0.5 12,0.8 13.5,2.8 C15,3.8 16.5,3 18.5,2.2 L18.5,10.5 C16.5,11.5 15,11.8 13.5,10.5 C12,9 10,9 8,10 Z" fill="#e4301a"/><path d="M12,2 C13,3.5 14,5 13.5,10.2 C12,9 11,9 10,9.2 Z" fill="#b82010" opacity="0.55"/></svg>
<div class="rt" style="top:509.5px">Mainz-Gustavsburg Gleis 3</div>
<div class="rt t1" style="top:509.5px">--:--:--</div>
<div class="rt t2" style="top:509.5px">--:--:--</div>
<div class="cb" style="top:538px"></div>
<svg class="ic" style="top:538px" width="22" height="18"><rect x="5" y="0.5" width="3" height="17" fill="#7c7c7c"/><path d="M8,0.5 C10,-0.5 12,0.8 13.5,2.8 C15,3.8 16.5,3 18.5,2.2 L18.5,10.5 C16.5,11.5 15,11.8 13.5,10.5 C12,9 10,9 8,10 Z" fill="#e4301a"/><path d="M12,2 C13,3.5 14,5 13.5,10.2 C12,9 11,9 10,9.2 Z" fill="#b82010" opacity="0.55"/></svg>
<div class="rt" style="top:535.5px">Mainz-Bischofsheim Pbf Gleis 1</div>
<div class="rt t1" style="top:535.5px">--:--:--</div>
<div class="rt t2" style="top:535.5px">--:--:--</div>
<div class="cb" style="top:564px"></div>
<svg class="ic" style="top:564px" width="22" height="18"><rect x="5" y="0.5" width="3" height="17" fill="#7c7c7c"/><path d="M8,0.5 C10,-0.5 12,0.8 13.5,2.8 C15,3.8 16.5,3 18.5,2.2 L18.5,10.5 C16.5,11.5 15,11.8 13.5,10.5 C12,9 10,9 8,10 Z" fill="#e4301a"/><path d="M12,2 C13,3.5 14,5 13.5,10.2 C12,9 11,9 10,9.2 Z" fill="#b82010" opacity="0.55"/></svg>
<div class="rt" style="top:561.5px">Rüsselsheim Opelwerk Gleis 24</div>
<div class="rt t1" style="top:561.5px">--:--:--</div>
<div class="rt t2" style="top:561.5px">--:--:--</div>
<div class="cb" style="top:590px"></div>
<svg class="ic" style="top:590px" width="22" height="18"><rect x="5" y="0.5" width="3" height="17" fill="#7c7c7c"/><path d="M8,0.5 C10,-0.5 12,0.8 13.5,2.8 C15,3.8 16.5,3 18.5,2.2 L18.5,10.5 C16.5,11.5 15,11.8 13.5,10.5 C12,9 10,9 8,10 Z" fill="#e4301a"/><path d="M12,2 C13,3.5 14,5 13.5,10.2 C12,9 11,9 10,9.2 Z" fill="#b82010" opacity="0.55"/></svg>
<div class="rt" style="top:587.5px">Rüsselsheim Gleis 3</div>
<div class="rt t1" style="top:587.5px">--:--:--</div>
<div class="rt t2" style="top:587.5px">--:--:--</div>
<div class="cb" style="top:616px"></div>
<svg class="ic" style="top:616px" width="22" height="18"><rect x="5" y="0.5" width="3" height="17" fill="#7c7c7c"/><path d="M8,0.5 C10,-0.5 12,0.8 13.5,2.8 C15,3.8 16.5,3 18.5,2.2 L18.5,10.5 C16.5,11.5 15,11.8 13.5,10.5 C12,9 10,9 8,10 Z" fill="#e4301a"/><path d="M12,2 C13,3.5 14,5 13.5,10.2 C12,9 11,9 10,9.2 Z" fill="#b82010" opacity="0.55"/></svg>
<div class="rt" style="top:613.5px">Raunheim Gleis 3</div>
<div class="rt t1" style="top:613.5px">--:--:--</div>
<div class="rt t2" style="top:613.5px">--:--:--</div>
<div class="cb" style="top:642px"></div>
<svg class="ic" style="top:642px" width="22" height="18"><rect x="5" y="0.5" width="3" height="17" fill="#7c7c7c"/><path d="M8,0.5 C10,-0.5 12,0.8 13.5,2.8 C15,3.8 16.5,3 18.5,2.2 L18.5,10.5 C16.5,11.5 15,11.8 13.5,10.5 C12,9 10,9 8,10 Z" fill="#e4301a"/><path d="M12,2 C13,3.5 14,5 13.5,10.2 C12,9 11,9 10,9.2 Z" fill="#b82010" opacity="0.55"/></svg>
<div class="rt" style="top:639.5px">Raunheim Mönchwald 2</div>
<div class="rt t1" style="top:639.5px">--:--:--</div>
<div class="rt t2" style="top:639.5px">--:--:--</div>
<div class="cb" style="top:668px"></div>
<svg class="ic" style="top:668px" width="22" height="18"><rect x="5" y="0.5" width="3" height="17" fill="#7c7c7c"/><path d="M8,0.5 C10,-0.5 12,0.8 13.5,2.8 C15,3.8 16.5,3 18.5,2.2 L18.5,10.5 C16.5,11.5 15,11.8 13.5,10.5 C12,9 10,9 8,10 Z" fill="#e4301a"/><path d="M12,2 C13,3.5 14,5 13.5,10.2 C12,9 11,9 10,9.2 Z" fill="#b82010" opacity="0.55"/></svg>
<div class="rt" style="top:665.5px">Raunheim Brunnenschneise 2</div>
<div class="rt t1" style="top:665.5px">--:--:--</div>
<div class="rt t2" style="top:665.5px">--:--:--</div>
<div class="cb" style="top:694px"></div>
<svg class="ic" style="top:694px" width="22" height="18"><rect x="5" y="0.5" width="3" height="17" fill="#7c7c7c"/><path d="M8,0.5 C10,-0.5 12,0.8 13.5,2.8 C15,3.8 16.5,3 18.5,2.2 L18.5,10.5 C16.5,11.5 15,11.8 13.5,10.5 C12,9 10,9 8,10 Z" fill="#e4301a"/><path d="M12,2 C13,3.5 14,5 13.5,10.2 C12,9 11,9 10,9.2 Z" fill="#b82010" opacity="0.55"/></svg>
<div class="rt" style="top:691.5px">Kelsterbach Gleis 2</div>
<div class="rt t1" style="top:691.5px">--:--:--</div>
<div class="rt t2" style="top:691.5px">--:--:--</div>
<div class="cb" style="top:720px"></div>
<svg class="ic" style="top:720px" width="22" height="18"><rect x="5" y="0.5" width="3" height="17" fill="#7c7c7c"/><path d="M8,0.5 C10,-0.5 12,0.8 13.5,2.8 C15,3.8 16.5,3 18.5,2.2 L18.5,10.5 C16.5,11.5 15,11.8 13.5,10.5 C12,9 10,9 8,10 Z" fill="#e4301a"/><path d="M12,2 C13,3.5 14,5 13.5,10.2 C12,9 11,9 10,9.2 Z" fill="#b82010" opacity="0.55"/></svg>
<div class="rt" style="top:717.5px">Frankfurt am Main Stadion Gleis 304</div>
<div class="rt t1" style="top:717.5px">--:--:--</div>
<div class="rt t2" style="top:717.5px">--:--:--</div>
<div class="cb" style="top:746px"></div>
<svg class="ic" style="top:746px" width="22" height="18"><rect x="5" y="0.5" width="3" height="17" fill="#7c7c7c"/><path d="M8,0.5 C10,-0.5 12,0.8 13.5,2.8 C15,3.8 16.5,3 18.5,2.2 L18.5,10.5 C16.5,11.5 15,11.8 13.5,10.5 C12,9 10,9 8,10 Z" fill="#e4301a"/><path d="M12,2 C13,3.5 14,5 13.5,10.2 C12,9 11,9 10,9.2 Z" fill="#b82010" opacity="0.55"/></svg>
<div class="rt" style="top:743.5px">Frankfurt am Main Stadion Gleis 4</div>
<div class="rt t1" style="top:743.5px">--:--:--</div>
<div class="rt t2" style="top:743.5px">--:--:--</div>
<div class="cb" style="top:772px"></div>
<svg class="ic" style="top:772px" width="22" height="18"><rect x="5" y="0.5" width="3" height="17" fill="#7c7c7c"/><path d="M8,0.5 C10,-0.5 12,0.8 13.5,2.8 C15,3.8 16.5,3 18.5,2.2 L18.5,10.5 C16.5,11.5 15,11.8 13.5,10.5 C12,9 10,9 8,10 Z" fill="#e4301a"/><path d="M12,2 C13,3.5 14,5 13.5,10.2 C12,9 11,9 10,9.2 Z" fill="#b82010" opacity="0.55"/></svg>
<div class="rt" style="top:769.5px">Frankfurt am Main Stadion Gleis 504</div>
<div class="rt t1" style="top:769.5px">--:--:--</div>
<div class="rt t2" style="top:769.5px">--:--:--</div>
<div class="cb" style="top:798px"></div>
<svg class="ic" style="top:798px" width="22" height="18"><rect x="5" y="0.5" width="3" height="17" fill="#7c7c7c"/><path d="M8,0.5 C10,-0.5 12,0.8 13.5,2.8 C15,3.8 16.5,3 18.5,2.2 L18.5,10.5 C16.5,11.5 15,11.8 13.5,10.5 C12,9 10,9 8,10 Z" fill="#e4301a"/><path d="M12,2 C13,3.5 14,5 13.5,10.2 C12,9 11,9 10,9.2 Z" fill="#b82010" opacity="0.55"/></svg>
<div class="rt" style="top:795.5px">Frankfurt-Niederrad Gleis 1</div>
<div class="rt t1" style="top:795.5px">--:--:--</div>
<div class="rt t2" style="top:795.5px">--:--:--</div>
<div class="cb" style="top:824px"></div>
<svg class="ic" style="top:824px" width="22" height="18"><rect x="5" y="0.5" width="3" height="17" fill="#7c7c7c"/><path d="M8,0.5 C10,-0.5 12,0.8 13.5,2.8 C15,3.8 16.5,3 18.5,2.2 L18.5,10.5 C16.5,11.5 15,11.8 13.5,10.5 C12,9 10,9 8,10 Z" fill="#e4301a"/><path d="M12,2 C13,3.5 14,5 13.5,10.2 C12,9 11,9 10,9.2 Z" fill="#b82010" opacity="0.55"/></svg>
<div class="rt" style="top:821.5px">Frankfurt-Niederrad Gleis 653</div>
<div class="rt t1" style="top:821.5px">--:--:--</div>
<div class="rt t2" style="top:821.5px">--:--:--</div>
<div class="cb" style="top:850px"></div>
<svg class="ic" style="top:850px" width="22" height="18"><rect x="5" y="0.5" width="3" height="17" fill="#7c7c7c"/><path d="M8,0.5 C10,-0.5 12,0.8 13.5,2.8 C15,3.8 16.5,3 18.5,2.2 L18.5,10.5 C16.5,11.5 15,11.8 13.5,10.5 C12,9 10,9 8,10 Z" fill="#e4301a"/><path d="M12,2 C13,3.5 14,5 13.5,10.2 C12,9 11,9 10,9.2 Z" fill="#b82010" opacity="0.55"/></svg>
<div class="rt" style="top:847.5px">Frankfurt-Niederrad Kreuzung 3620 R</div>
<div class="rt t1" style="top:847.5px">--:--:--</div>
<div class="rt t2" style="top:847.5px">--:--:--</div>
<div class="cb" style="top:876px"></div>
<div class="rt" style="top:873.5px">Frankfurt (Main) Hbf Gleis 05</div>
<div class="rt t1" style="top:873.5px">07:43:55</div>
<div class="rt t2" style="top:873.5px">07:44:15</div>
<div class="cb" style="top:902px"></div>
<div class="rt" style="top:899.5px">Frankfurt (Main) Hbf Gleis 05</div>
<div class="rt t1" style="top:899.5px">07:44:15</div>
<div class="rt t2" style="top:899.5px">07:44:15</div></div><!-- separator line above last row -->
<div class="a" style="left:954px;top:897.5px;width:693px;height:1.5px;background:#8e8e8e"></div>
<!-- scrollbar -->
<div class="a" style="left:1647px;top:91px;width:16.5px;height:841px;background:#363a4f"></div>
<div class="a" style="left:1647px;top:91px;width:16.5px;height:15px;background:#343a80;border-top:1px solid #c0c0c8;border-left:1px solid #9a9ab0"></div>
<svg class="a" style="left:1647px;top:91px" width="17" height="15"><path d="M3.5,12 L13,12 L8.25,3.5 Z" fill="#f4f4f4"/></svg>
<div class="a" style="left:1647px;top:902px;width:16.5px;height:30px;background:linear-gradient(#4a5078,#2e3478 40%,#3a4088);border-top:1px solid #a8acc0;border-left:1px solid #a8acc0"></div>
<svg class="a" style="left:1647px;top:915px" width="17" height="17"><path d="M3.5,6 L13,6 L8.25,14 Z" fill="#f4f4f4"/></svg>
<!-- row icons: hand and arrow -->
<svg class="a" style="left:996px;top:874px" width="24" height="20">
 <path d="M10.5,3 C11.5,3 11.8,4.5 11,6 L9.5,8.2 L20.5,8.2 C21.5,8.4 21.5,10.4 20.5,10.6 L15.5,10.8 L15,14.5 C14.5,15.8 12,16.2 8,16 C5,15.8 3.2,15 3.2,12.5 C3.2,10 4.5,9 6.5,8.5 C8,7.5 9.5,5 10.5,3 Z" fill="#e4a08c"/>
</svg>
<svg class="a" style="left:996px;top:900px" width="24" height="20">
 <rect x="11" y="2.5" width="9.5" height="15" fill="#2aa0dc"/>
 <path d="M2,7.5 L7,7.5 L7,3 L14.5,10 L7,17 L7,12.5 L2,12.5 Z" fill="#f5901c"/>
</svg>
<!-- bottom bar -->
<div class="a" id="bottombar"></div>
<div class="a" style="left:973px;top:950px;width:645px;height:80px;background:linear-gradient(#1d2129 0,#1a1e27 62px,rgba(37,42,53,0) 80px)"></div>
<div class="a" style="left:1627px;top:950px;width:37px;height:112px;background:#232a23"></div>
<div class="a" id="bottompanel"></div>
<!-- OK button -->
<div class="a" style="left:1470px;top:965.5px;width:174px;height:81px;border:1px solid rgba(90,98,115,0.5);background:linear-gradient(rgba(110,120,135,0.28),rgba(110,120,135,0.26) 55%,rgba(130,140,155,0.32))"></div>
<div class="a" style="left:1473px;top:968.5px;width:168px;height:75px;border:1px solid rgba(120,130,150,0.55)"></div>
<div class="a" style="left:1470px;top:990px;width:174px;text-align:center;font-size:25px;line-height:30px;color:#f6f6f6;will-change:transform">OK</div>
</body></html>
